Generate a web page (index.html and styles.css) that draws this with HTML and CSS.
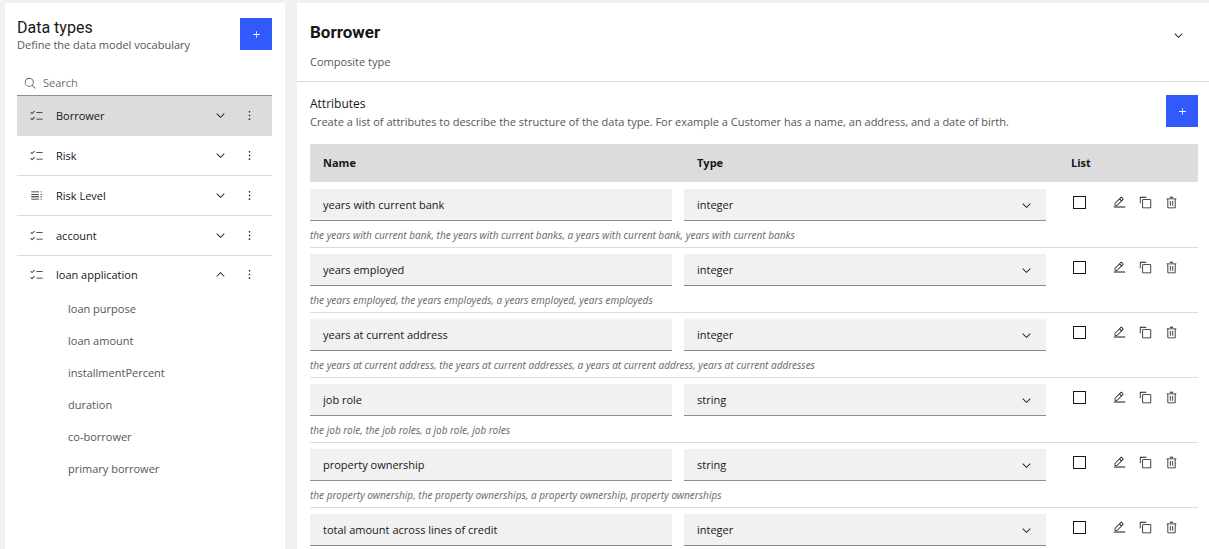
FILE: index.html
```
<!DOCTYPE html>
<html lang="en">
<head>
<meta charset="utf-8">
<title>Data types</title>
<link rel="stylesheet" href="styles.css">
</head>
<body>
<svg class="sprite" aria-hidden="true">
  <symbol id="add" viewBox="0 0 32 32"><path d="M17 15V8h-2v7H8v2h7v7h2v-7h7v-2z"/></symbol>
  <symbol id="search" viewBox="0 0 32 32"><path d="M29 27.6l-7.6-7.6a11 11 0 1 0-1.4 1.4L27.6 29zM4 13a9 9 0 1 1 9 9 9 9 0 0 1-9-9z"/></symbol>
  <symbol id="down" viewBox="0 0 16 16"><path d="M8 11L3 6l.7-.7L8 9.6l4.3-4.3L13 6z"/></symbol>
  <symbol id="up" viewBox="0 0 16 16"><path d="M8 5l5 5-.7.7L8 6.4l-4.3 4.3L3 10z"/></symbol>
  <symbol id="more" viewBox="0 0 16 16"><circle cx="8" cy="3.500" r="1"/><circle cx="8" cy="8" r="1"/><circle cx="8" cy="12.500" r="1"/></symbol>
  <symbol id="checks" viewBox="0 0 32 32"><path d="M16 8h15v2H16zM16 24h15v2H16zM5 12.500l-4-4 1.400-1.400L5 9.700l5.600-5.600L12 5.500zM5 27.500l-4-4 1.400-1.400L5 24.700l5.600-5.600L12 20.500z"/></symbol>
  <symbol id="lines" viewBox="0 0 32 32"><path d="M3 6h19v2H3zM3 12h19v2H3zM3 18h19v2H3zM3 24h19v2H3zM26 6h3v2h-3zM26 12h3v2h-3zM26 18h3v2h-3zM26 24h3v2h-3z"/></symbol>
  <symbol id="edit" viewBox="0 0 32 32"><path d="M2 26h28v2H2zM25.400 9c.8-.8.8-2 0-2.800l-3.600-3.600c-.8-.8-2-.8-2.800 0l-15 15V24h6.400zM20.400 4L24 7.600l-3 3L17.400 7zM6 22v-3.600l10-10 3.600 3.600-10 10z"/></symbol>
  <symbol id="copy" viewBox="0 0 32 32"><path d="M28 10v18H10V10h18m0-2H10a2 2 0 0 0-2 2v18a2 2 0 0 0 2 2h18a2 2 0 0 0 2-2V10a2 2 0 0 0-2-2z"/><path d="M4 18H2V4a2 2 0 0 1 2-2h14v2H4z"/></symbol>
  <symbol id="trash" viewBox="0 0 32 32"><path d="M12 12h2v12h-2zM18 12h2v12h-2zM4 6v2h2v20a2 2 0 0 0 2 2h16a2 2 0 0 0 2-2V8h2V6zM8 28V8h16v20zM12 2h8v2h-8z"/></symbol>
</svg>

<div class="app">
  <aside class="sidebar">
    <header class="bar">
      <div>
        <h1 class="title">Data types</h1>
        <p class="muted">Define the data model vocabulary</p>
      </div>
      <button class="add" aria-label="Add data type"><svg class="icon"><use href="#add"/></svg></button>
    </header>
    <label class="search">
      <svg class="icon"><use href="#search"/></svg>
      <input type="search" placeholder="Search" aria-label="Search">
    </label>
    <ul class="types">
      <li class="type selected"><svg class="icon"><use href="#checks"/></svg><a href="#">Borrower</a><button aria-label="Expand Borrower"><svg class="icon"><use href="#down"/></svg></button><button aria-label="Borrower options"><svg class="icon"><use href="#more"/></svg></button></li>
      <li class="type"><svg class="icon"><use href="#checks"/></svg><a href="#">Risk</a><button aria-label="Expand Risk"><svg class="icon"><use href="#down"/></svg></button><button aria-label="Risk options"><svg class="icon"><use href="#more"/></svg></button></li>
      <li class="type"><svg class="icon"><use href="#lines"/></svg><a href="#">Risk Level</a><button aria-label="Expand Risk Level"><svg class="icon"><use href="#down"/></svg></button><button aria-label="Risk Level options"><svg class="icon"><use href="#more"/></svg></button></li>
      <li class="type"><svg class="icon"><use href="#checks"/></svg><a href="#">account</a><button aria-label="Expand account"><svg class="icon"><use href="#down"/></svg></button><button aria-label="account options"><svg class="icon"><use href="#more"/></svg></button></li>
      <li class="type open"><svg class="icon"><use href="#checks"/></svg><a href="#">loan application</a><button aria-label="Collapse loan application"><svg class="icon"><use href="#up"/></svg></button><button aria-label="loan application options"><svg class="icon"><use href="#more"/></svg></button></li>
    </ul>
    <ul class="fields">
      <li><a href="#">loan purpose</a></li>
      <li><a href="#">loan amount</a></li>
      <li><a href="#">installmentPercent</a></li>
      <li><a href="#">duration</a></li>
      <li><a href="#">co-borrower</a></li>
      <li><a href="#">primary borrower</a></li>
    </ul>
  </aside>

  <main class="main">
    <header class="heading">
      <div>
        <h2 class="name">Borrower</h2>
        <p class="muted">Composite type</p>
      </div>
      <button class="toggle" aria-label="Expand details"><svg class="icon"><use href="#down"/></svg></button>
    </header>
    <section class="attributes">
      <div class="bar">
        <div class="intro">
          <h3 class="subtitle">Attributes</h3>
          <p class="muted">Create a list of attributes to describe the structure of the data type. For example a Customer has a name, an address, and a date of birth.</p>
        </div>
        <button class="add" aria-label="Add attribute"><svg class="icon"><use href="#add"/></svg></button>
      </div>
      <table class="grid">
        <colgroup><col><col><col class="col-list"><col class="col-actions"></colgroup>
        <thead><tr><th>Name</th><th>Type</th><th>List</th><th></th></tr></thead>
        <tbody id="rows"></tbody>
      </table>
    </section>
  </main>
</div>
<script src="app.js"></script>
</body>
</html>
```
FILE: app.js
```
const attributes = [
  ["years with current bank", "integer", "the years with current bank, the years with current banks, a years with current bank, years with current banks"],
  ["years employed", "integer", "the years employed, the years employeds, a years employed, years employeds"],
  ["years at current address", "integer", "the years at current address, the years at current addresses, a years at current address, years at current addresses"],
  ["job role", "string", "the job role, the job roles, a job role, job roles"],
  ["property ownership", "string", "the property ownership, the property ownerships, a property ownership, property ownerships"],
  ["total amount across lines of credit", "integer", ""]
];

const action = (icon, label) =>
  `<button aria-label="${label}"><svg class="icon"><use href="#${icon}"/></svg></button>`;

document.getElementById("rows").innerHTML = attributes.map(([name, type, hint]) => `
  <tr class="edit-row">
    <td><input class="field" type="text" value="${name}" aria-label="Name"></td>
    <td><div class="picker"><select class="field" aria-label="Type of ${name}"><option>${type}</option></select><svg class="icon"><use href="#down"/></svg></div></td>
    <td><input class="box" type="checkbox" aria-label="${name} is a list"></td>
    <td><div class="actions">${action("edit", "Edit " + name)}${action("copy", "Copy " + name)}${action("trash", "Delete " + name)}</div></td>
  </tr>
  <tr class="hint-row"><td colspan="4">${hint}</td></tr>`).join("");
```
FILE: styles.css
```
* {
  box-sizing: border-box;
}

body {
  margin: 0;
  height: 100vh;
  overflow: hidden;
  background: #f1f1f1;
  color: #171717;
  font: 11px/16px "Open Sans", "Noto Sans", sans-serif;
}

h1, h2, h3, p, ul {
  margin: 0;
  padding: 0;
}

ul {
  list-style: none;
}

a {
  color: inherit;
  text-decoration: none;
}

button {
  display: flex;
  align-items: center;
  justify-content: center;
  padding: 0;
  border: 0;
  background: none;
  color: inherit;
}

input, select {
  font: inherit;
  color: inherit;
}

.sprite {
  display: none;
}

.icon {
  display: block;
  flex: none;
  width: 13px;
  height: 13px;
  fill: currentColor;
}

.app {
  display: grid;
  grid-template-columns: 280px 1fr;
  gap: 12px;
  height: 100%;
  padding: 3px 0 0 5px;
}

.sidebar, .main {
  min-width: 0;
  background: #fff;
  overflow: hidden;
}

.sidebar {
  padding: 15px 13px 0 12px;
}

.bar {
  display: flex;
  justify-content: space-between;
}

.title {
  font: 16px/19px Roboto, sans-serif;
}

.muted {
  color: #565656;
}

.add {
  flex: none;
  width: 32px;
  height: 32px;
  background: #3259fb;
  color: #fff;
}

.search {
  display: flex;
  align-items: center;
  gap: 6px;
  height: 25px;
  margin-top: 18px;
  padding-left: 7px;
  border-bottom: 1px solid #8c8c8c;
  color: #565656;
}

.search input {
  flex: 1;
  min-width: 0;
  padding: 0;
  border: 0;
  outline: 0;
  background: none;
}

.search input::placeholder {
  color: #6f6f6f;
  opacity: 1;
}

.type {
  display: flex;
  align-items: center;
  gap: 16px;
  height: 40px;
  padding: 0 16px 0 13px;
  border-bottom: 1px solid #dcdcdc;
}

.type a {
  flex: 1;
  margin-left: -3px;
}

.type.selected {
  background: #dcdcdc;
}

.type.open {
  height: 37px;
  border-bottom: 0;
}

.fields a {
  display: block;
  padding: 8px 0 8px 51px;
  color: #565656;
}

.heading {
  display: flex;
  justify-content: space-between;
  padding: 19px 24px 11px 13px;
  border-bottom: 1px solid #dcdcdc;
}

.heading .muted {
  margin-top: 12px;
}

.name {
  font: bold 17px/20px Roboto, sans-serif;
}

.toggle {
  align-self: flex-start;
  margin-top: 7px;
}

.attributes {
  padding: 13px 11px 0 13px;
}

.intro {
  padding-top: 1px;
}

.subtitle {
  margin-bottom: 2px;
  font-size: 12px;
  font-weight: 400;
  line-height: 16px;
}

.grid {
  width: 100%;
  margin-top: 14px;
  table-layout: fixed;
  border-collapse: separate;
  border-spacing: 0;
}

.col-list {
  width: 50px;
}

.col-actions {
  width: 90px;
}

.grid th {
  height: 38px;
  padding: 0 13px;
  background: #dcdcdc;
  text-align: left;
}

.grid td {
  padding: 0;
}

.edit-row td {
  padding-top: 6px;
  vertical-align: top;
}

.edit-row:first-child td {
  padding-top: 7px;
}

.edit-row td:nth-child(-n+2) {
  padding-right: 12px;
}

.field {
  display: block;
  width: 100%;
  height: 32px;
  padding: 0 13px;
  border: 0;
  border-bottom: 1px solid #8c8c8c;
  border-radius: 0;
  outline: 0;
  background: #f1f1f1;
  appearance: none;
}

.picker {
  display: grid;
  align-items: center;
}

.picker > * {
  grid-area: 1 / 1;
}

.picker .icon {
  justify-self: end;
  margin-right: 13px;
  pointer-events: none;
}

.box {
  display: block;
  width: 13px;
  height: 13px;
  margin: 7px 0 0 15px;
  border: 1px solid #171717;
  border-radius: 0;
  appearance: none;
}

.actions {
  display: flex;
  gap: 13px;
  margin: 7px 0 0 5px;
}

.grid .hint-row td {
  height: 27px;
  padding-top: 1px;
  border-bottom: 1px solid #dcdcdc;
  color: #6f6f6f;
  font-family: "Noto Sans", sans-serif;
  font-size: 10px;
  font-style: italic;
}
```
